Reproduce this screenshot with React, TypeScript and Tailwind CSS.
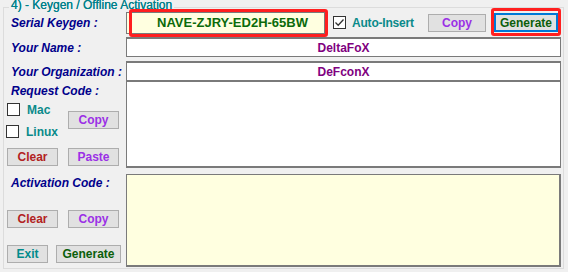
import React from "react";

const Btn = ({ children, color, w, className = "" }: { children: React.ReactNode; color: string; w: string; className?: string }) => (
  <div
    className={`h-[18px] ${w} bg-[#e1e1e1] border border-[#adadad] flex items-center justify-center text-[12px] font-bold leading-none ${color} ${className}`}
  >
    {children}
  </div>
);

const Check = ({ checked = false }: { checked?: boolean }) => (
  <div className="w-[13px] h-[13px] border border-[#333333] bg-white flex items-center justify-center shrink-0">
    {checked && (
      <svg width="11" height="11" viewBox="0 0 11 11">
        <path d="M1.5 5.5 L4.2 8.2 L9.5 2.5" fill="none" stroke="#333333" strokeWidth="1.3" />
      </svg>
    )}
  </div>
);

const Label = ({ children }: { children: React.ReactNode }) => (
  <span className="text-[12px] font-bold italic text-[#00008b] whitespace-nowrap">{children}</span>
);

export default function App() {
  return (
    <div className="w-[568px] h-[272px] bg-[#f0f0f0] overflow-hidden font-['Liberation_Sans',Arial,sans-serif]">
      <div className="relative ml-[3px] mt-[7px] w-[561px] h-[262px] border border-[#dcdcdc]">
        <div className="absolute left-[5px] top-[-10px] px-[2px] bg-[#f0f0f0] text-[12px] leading-[14px] text-[#00808a] whitespace-nowrap [text-shadow:0_0_0.3px_#00808a]">
          4) - Keygen / Offline Activation
        </div>
        <div className="flex flex-col">
          {/* Row 1: serial */}
          <div className="flex items-center h-[29px]">
            <div className="w-[122px] pl-[7px] flex items-center">
              <Label>Serial Keygen :</Label>
            </div>
            <div className="relative w-[199px] h-[22px] border border-[#7a7a7a] bg-[#ffffe0] flex items-center justify-center pl-[14px]">
              <span className="text-[13px] font-bold text-[#0b6b0b] whitespace-nowrap">NAVE-ZJRY-ED2H-65BW</span>
              <div className="absolute left-[2px] top-[-4px] w-[199px] h-[28px] border-[3px] border-[#ff1f1f] rounded-[3px]" />
            </div>
            <div className="w-[103px] pl-[8px] flex items-center">
              <Check checked />
              <span className="ml-[6px] text-[12px] font-bold text-[#0a8a8a] whitespace-nowrap tracking-[-0.2px]">Auto-Insert</span>
            </div>
            <Btn color="text-[#9b30e6]" w="w-[58px]">Copy</Btn>
            <div className="relative ml-[8px] w-[64px] h-[19px] bg-[#e1e1e1] border-2 border-[#0078d7] flex items-center justify-center text-[12px] font-bold text-[#0b5e0b]">
              Generate
              <div className="absolute left-[-5px] top-[-7px] w-[70px] h-[28px] border-[3px] border-[#ff1f1f] rounded-[3px]" />
            </div>
          </div>
          {/* Row 2: name */}
          <div className="flex items-center h-[20px]">
            <div className="w-[122px] pl-[7px]">
              <Label>Your Name :</Label>
            </div>
            <div className="w-[435px] h-[20px] border border-[#7a7a7a] border-t-2 bg-white flex items-center justify-center text-[12px] font-bold text-[#800080]">
              DeltaFoX
            </div>
          </div>
          {/* Row 3: org */}
          <div className="flex items-center h-[20px] mt-[4px]">
            <div className="w-[122px] pl-[7px]">
              <Label>Your Organization :</Label>
            </div>
            <div className="w-[435px] h-[20px] border border-[#7a7a7a] border-t-2 bg-white flex items-center justify-center text-[12px] font-bold text-[#800080]">
              DeFconX
            </div>
          </div>
          {/* Row 4: request */}
          <div className="flex h-[87px]">
            <div className="w-[122px] flex flex-col">
              <div className="h-[20px] pl-[7px] flex items-center mt-[0px]">
                <Label>Request Code :</Label>
              </div>
              <div className="flex mt-[2px]">
                <div className="w-[64px] flex flex-col">
                  <div className="flex items-center pl-[3px] h-[13px]">
                    <Check />
                    <span className="ml-[7px] text-[12px] font-bold text-[#0a8a8a]">Mac</span>
                  </div>
                  <div className="flex items-center pl-[2px] h-[13px] mt-[9px]">
                    <Check />
                    <span className="ml-[7px] text-[12px] font-bold text-[#0a8a8a]">Linux</span>
                  </div>
                </div>
                <div className="mt-[8px]">
                  <Btn color="text-[#9b30e6]" w="w-[51px]">Copy</Btn>
                </div>
              </div>
              <div className="flex mt-[10px] pl-[3px] gap-[10px]">
                <Btn color="text-[#b22222]" w="w-[51px]">Clear</Btn>
                <Btn color="text-[#9b30e6]" w="w-[51px]">Paste</Btn>
              </div>
            </div>
            <div className="w-[435px] h-[87px] border border-[#7a7a7a] border-b-2 bg-white" />
          </div>
          {/* Row 5: activation */}
          <div className="flex h-[93px] mt-[6px]">
            <div className="w-[122px] flex flex-col">
              <div className="h-[18px] pl-[7px] flex items-center">
                <Label>Activation Code :</Label>
              </div>
              <div className="flex mt-[18px] pl-[3px] gap-[10px]">
                <Btn color="text-[#b22222]" w="w-[51px]">Clear</Btn>
                <Btn color="text-[#9b30e6]" w="w-[51px]">Copy</Btn>
              </div>
              <div className="flex mt-[17px] pl-[3px] gap-[8px]">
                <Btn color="text-[#008b8b]" w="w-[41px]">Exit</Btn>
                <Btn color="text-[#0b5e0b]" w="w-[65px]">Generate</Btn>
              </div>
            </div>
            <div className="w-[435px] h-[93px] border-2 border-[#7a7a7a] border-l border-t bg-[#ffffe0]" />
          </div>
        </div>
      </div>
    </div>
  );
}
